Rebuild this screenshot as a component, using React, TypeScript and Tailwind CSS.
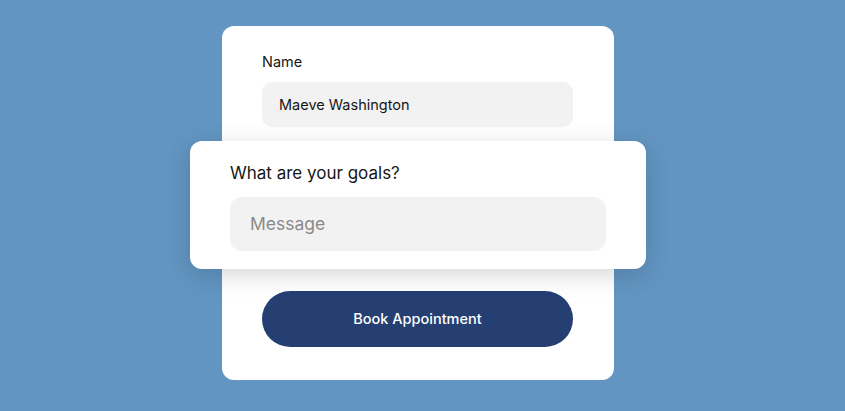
export default function App() {
  return (
    <div
      className="w-full h-[411px] bg-[#6295c2] flex justify-center items-start pt-[26px] overflow-hidden"
      style={{ fontFamily: "Inter, 'Noto Sans', sans-serif" }}
    >
      <div className="w-[392px] h-[354px] mr-[9px] bg-white rounded-[12px] flex flex-col pt-[26px]">
        <div className="mx-[40px] flex flex-col">
          <label className="text-[14.5px] leading-[20px] text-[#161616]">Name</label>
          <div className="mt-[10px] h-[45px] w-[311px] rounded-[10px] bg-[#f2f2f2] flex items-center px-[17px] text-[14.5px] text-[#161616]">
            Maeve Washington
          </div>
        </div>

        {/* raised card overlapping the form */}
        <div className="relative z-10 -mx-[32px] mt-[14px] h-[128px] bg-white rounded-[12px] shadow-[0_6px_24px_rgba(0,0,0,0.16)] px-[40px] pt-[20px] flex flex-col">
          <label className="text-[17px] leading-[24px] text-[#161616]">What are your goals?</label>
          <div className="mt-[12px] h-[54px] rounded-[12px] bg-[#f2f2f2] flex items-center px-[20px] text-[17.5px] text-[#8a8a8a]">
            Message
          </div>
        </div>

        <button className="mx-[40px] mt-[22px] h-[56px] w-[311px] rounded-full bg-[#263f73] text-white text-[14.5px] font-medium">
          Book Appointment
        </button>
      </div>
    </div>
  );
}
